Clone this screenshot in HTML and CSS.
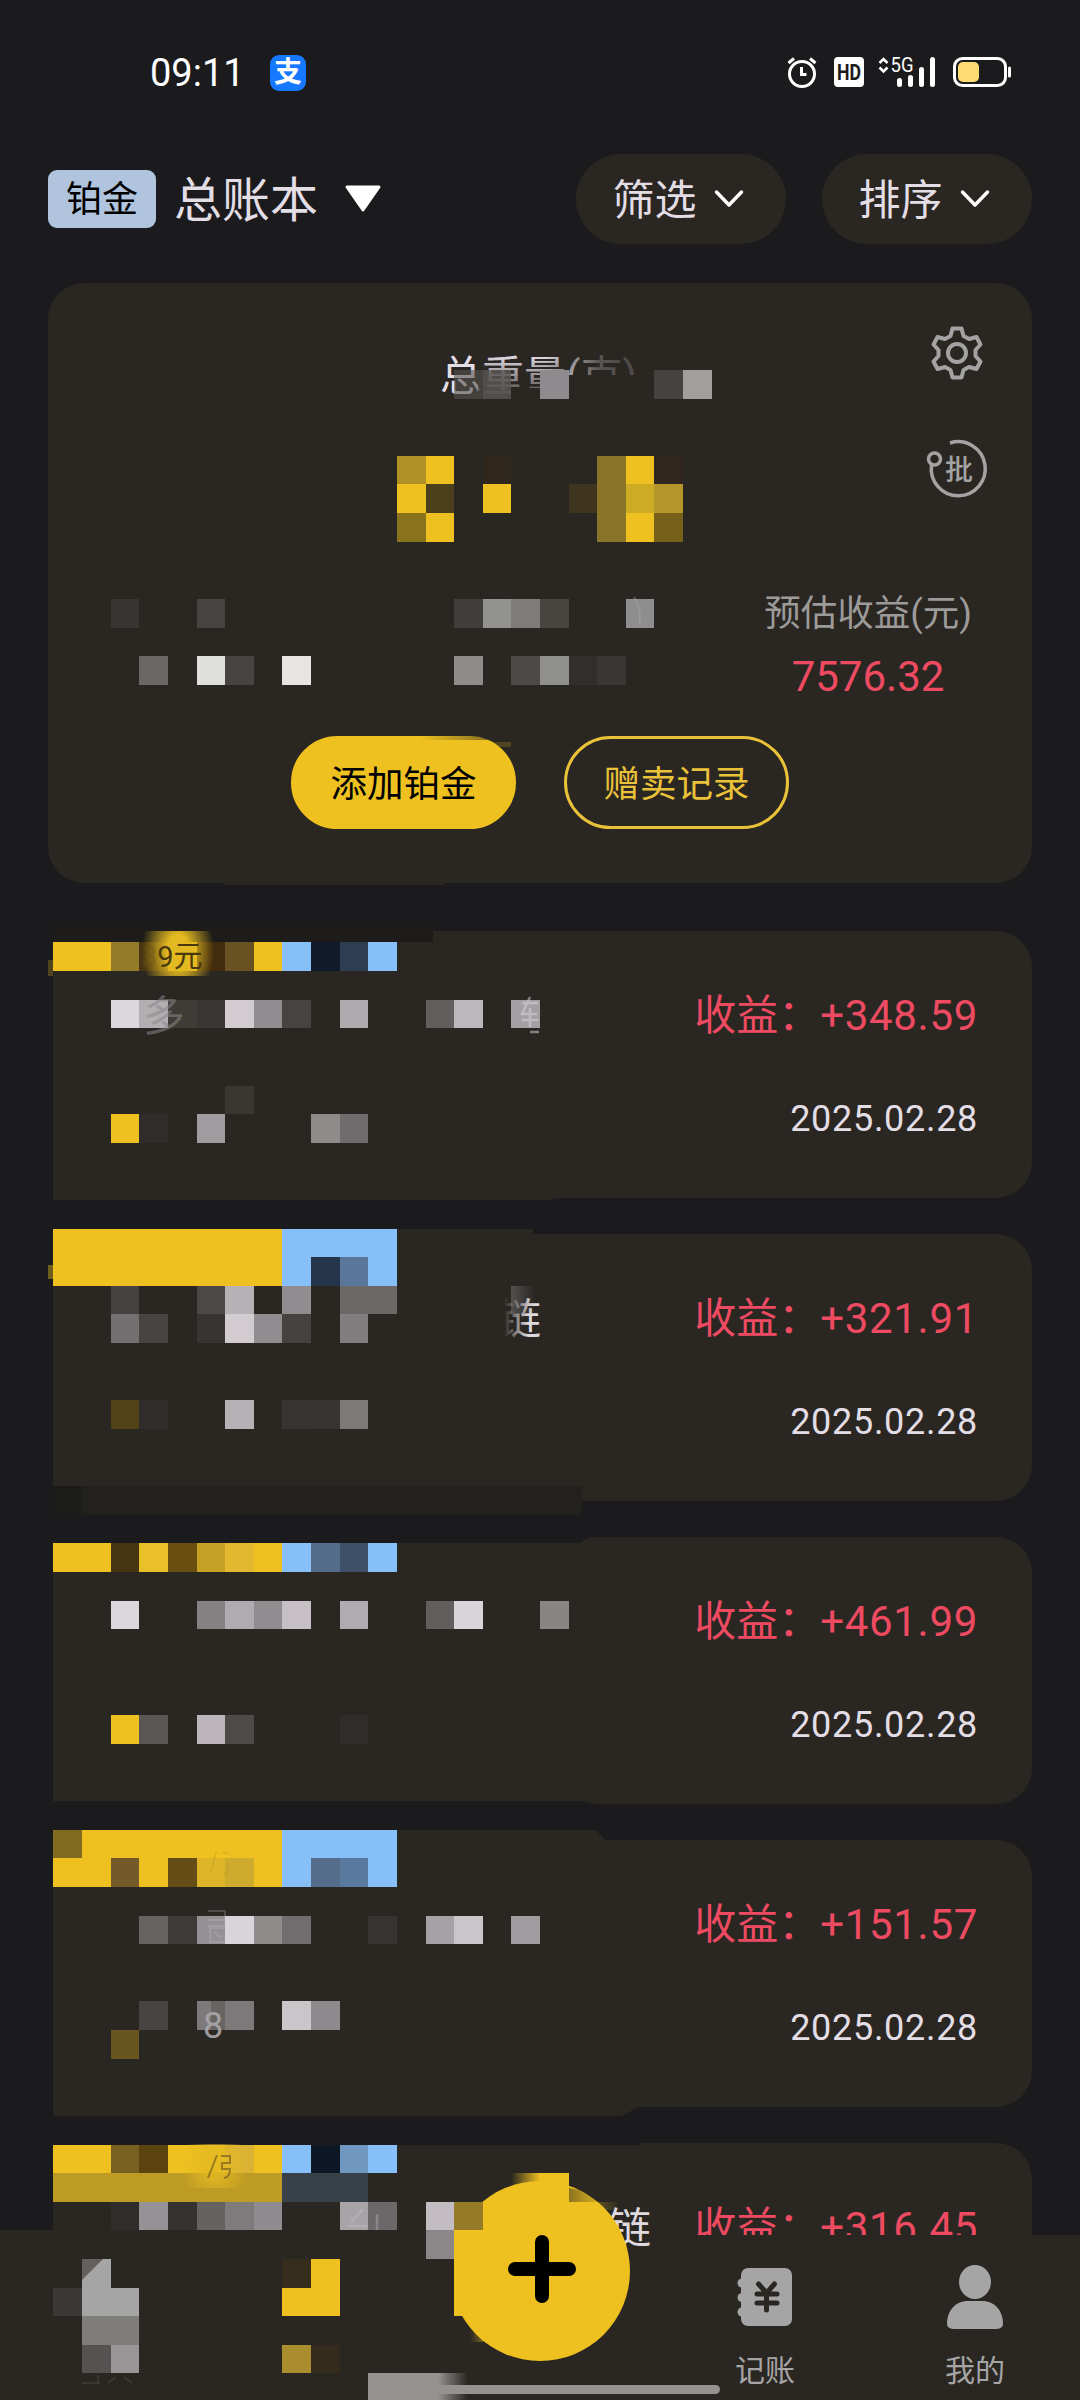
FILE: index.html
```html
<!DOCTYPE html>
<html lang="zh-CN">
<head>
    <meta charset="UTF-8">
    <meta name="viewport" content="width=device-width, initial-scale=1.0">
    <title>总账本</title>
    <link rel="stylesheet" href="styles.css">
</head>
<body>
    <div id="app">
        <!-- 状态栏 -->
        <div class="status">
            <span class="time">09:11</span>
            <span class="pay">支</span>
            <svg class="statusIcons" width="228" height="40" viewBox="786 53 228 40">
                <g fill="none" stroke="#fff" stroke-width="3">
                    <circle cx="802" cy="74" r="12.500"/>
                    <path d="M801.500 67v7.500h5M788.500 63l5.500-4.500M815.500 63l-5.500-4.500"/>
                </g>
                <rect x="834" y="57" width="30" height="30" rx="4" fill="#fff"/>
                <text x="849" y="80" font-size="22" font-weight="700" text-anchor="middle" textLength="24" lengthAdjust="spacingAndGlyphs" fill="#1b1b1d">HD</text>
                <path d="M879.500 63l4-4 4 4M879.500 67.500l4 4 4-4" fill="none" stroke="#fff" stroke-width="2.500"/>
                <text x="890.500" y="72" font-size="20" textLength="23" lengthAdjust="spacingAndGlyphs" fill="#fff">5G</text>
                <path d="M899.500 80.500v4M910.500 77.500v7M921.500 69.500v15M932.500 59.500v25" stroke="#fff" stroke-width="5" stroke-linecap="round"/>
                <rect x="954.500" y="58.500" width="51" height="27" rx="8" fill="none" stroke="#fff" stroke-width="3"/>
                <rect x="958" y="62" width="21" height="20" rx="5" fill="#ffdc73"/>
                <path d="M1009.500 68v8" stroke="#fff" stroke-width="3" stroke-linecap="round"/>
            </svg>
        </div>

        <!-- 顶部 -->
        <div class="header">
            <span class="metal">铂金</span>
            <span class="book">总账本</span>
            <svg class="arrow" width="38" height="28" viewBox="0 0 38 28"><path d="M3 2h32L19 25z" fill="#fff" stroke="#fff" stroke-width="3" stroke-linejoin="round"/></svg>
            <div class="pill"><span>筛选</span><svg width="30" height="20" viewBox="0 0 30 20"><path d="M2.500 3L15 16 27.500 3"/></svg></div>
            <div class="pill"><span>排序</span><svg width="30" height="20" viewBox="0 0 30 20"><path d="M2.500 3L15 16 27.500 3"/></svg></div>
        </div>

        <!-- 汇总 -->
        <div class="summary">
            <div class="weight">总重量(克)</div>
            <div class="tools">
                <svg width="60" height="60" viewBox="-29 -30 60 60" fill="none" stroke="#a3a3a3" stroke-width="4" stroke-linejoin="round">
                    <path d="M-4.500-24.500H4.500L6.500-17 12-14 19.500-16 23.500-8.500 18.500-3V3L23.500 8.500 19.500 16 12 14 6.500 17 4.500 24.500H-4.500L-6.500 17-12 14-19.500 16-23.500 8.500-18.500 3V-3L-23.500-8.500-19.500-16-12-14-6.500-17z"/>
                    <circle r="9"/>
                </svg>
                <svg width="64" height="64" viewBox="926 437 64 64" fill="none" stroke="#a3a3a3" stroke-width="3.500">
                    <path d="M950 443a27 27 0 1 1-18.500 22"/>
                    <circle cx="934.500" cy="459" r="6"/>
                    <text x="959" y="480" font-size="28" font-weight="500" text-anchor="middle" fill="#a3a3a3" stroke="none">批</text>
                </svg>
            </div>
            <div class="profit">
                <p>预估收益(元)</p>
                <b>7576.32</b>
            </div>
            <div class="btns">
                <span class="btn add">添加铂金</span>
                <span class="btn">赠卖记录</span>
            </div>
            <svg class="mosaic" viewBox="48 283 984 600">
                <defs>
                    <linearGradient id="fadeDown" x2="0" y2="1"><stop stop-color="#2a2622" stop-opacity="0"/><stop offset="1" stop-color="#2a2622"/></linearGradient>
                    <linearGradient id="fadeRight"><stop stop-color="#2a2622" stop-opacity="0"/><stop offset="1" stop-color="#2a2622"/></linearGradient>
                    <linearGradient id="dim"><stop stop-color="#2a2622" stop-opacity="0"/><stop offset=".5" stop-color="#2a2622" stop-opacity=".75"/><stop offset="1" stop-color="#2a2622" stop-opacity=".85"/></linearGradient>
                    <linearGradient id="fadeLeft"><stop stop-color="#2a2622"/><stop offset="1" stop-color="#2a2622" stop-opacity="0"/></linearGradient>
                    <radialGradient id="glow"><stop offset=".3" stop-color="#e3b921"/><stop offset="1" stop-color="#e3b921" stop-opacity="0"/></radialGradient>
                    <linearGradient id="goldOut"><stop stop-color="#eec120"/><stop offset="1" stop-color="#eec120" stop-opacity="0"/></linearGradient>
                    <linearGradient id="goldIn"><stop stop-color="#eec120" stop-opacity="0"/><stop offset="1" stop-color="#eec120"/></linearGradient>
                    <linearGradient id="greyOut"><stop offset=".7" stop-color="#949390"/><stop offset="1" stop-color="#949390" stop-opacity="0"/></linearGradient>
                    <linearGradient id="greyFade"><stop stop-color="#656261"/><stop offset="1" stop-color="#656261" stop-opacity="0"/></linearGradient>
                </defs>
                <rect x="478" y="355" width="90" height="50" fill="url(#fadeDown)"/>
                <rect x="545" y="345" width="110" height="60" fill="url(#dim)"/>
                <rect x="565" y="375" width="85" height="30" fill="#2a2622"/>
                <rect x="454" y="370" width="29" height="29" fill="#56524f" opacity=".6"/>
                <rect x="483" y="370" width="28" height="29" fill="#5b5755" opacity=".8"/>
                <rect x="511" y="388" width="58" height="16" fill="#2a2622"/>
                <rect x="540" y="370" width="29" height="29" fill="#8f8a8d"/>
                <rect x="654" y="370" width="29" height="29" fill="#464240"/>
                <rect x="683" y="370" width="29" height="29" fill="#a09f9d"/>
                <rect x="397" y="456" width="29" height="28" fill="#af9125"/>
                <rect x="426" y="456" width="28" height="28" fill="#eec120"/>
                <rect x="483" y="456" width="28" height="28" fill="#2f261c"/>
                <rect x="597" y="456" width="29" height="86" fill="#8a7427"/>
                <rect x="626" y="456" width="28" height="86" fill="#eec120"/>
                <rect x="654" y="456" width="29" height="28" fill="#30251f"/>
                <rect x="397" y="484" width="29" height="29" fill="#eec120"/>
                <rect x="426" y="484" width="28" height="29" fill="#4c3f1c"/>
                <rect x="483" y="484" width="28" height="29" fill="#eec120"/>
                <rect x="569" y="484" width="28" height="29" fill="#3f351e"/>
                <rect x="626" y="484" width="28" height="29" fill="#cdab25"/>
                <rect x="654" y="484" width="29" height="29" fill="#b5962a"/>
                <rect x="397" y="513" width="29" height="29" fill="#8a731d"/>
                <rect x="426" y="513" width="28" height="29" fill="#eec120"/>
                <rect x="654" y="513" width="29" height="29" fill="#77611a"/>
                <rect x="111" y="599" width="28" height="29" fill="#383431"/>
                <rect x="197" y="599" width="28" height="29" fill="#474341"/>
                <rect x="454" y="599" width="29" height="29" fill="#403d3a"/>
                <rect x="483" y="599" width="28" height="29" fill="#929390"/>
                <rect x="511" y="599" width="29" height="29" fill="#7e7c79"/>
                <rect x="540" y="599" width="29" height="29" fill="#484440"/>
                <rect x="626" y="599" width="28" height="29" fill="#8f8e8f"/>
                <path d="M634 597q7 10 6 27" stroke="#a9a7a6" stroke-width="2" fill="none" opacity=".4"/>
                <rect x="139" y="656" width="29" height="29" fill="#696864"/>
                <rect x="197" y="656" width="28" height="29" fill="#dfe0db"/>
                <rect x="225" y="656" width="29" height="29" fill="#474340"/>
                <rect x="282" y="656" width="29" height="29" fill="#e6e5e3"/>
                <rect x="454" y="656" width="29" height="29" fill="#8e8d89"/>
                <rect x="511" y="656" width="29" height="29" fill="#4d4946"/>
                <rect x="540" y="656" width="29" height="29" fill="#8f8f8b"/>
                <rect x="569" y="656" width="28" height="29" fill="#322e2b"/>
                <rect x="597" y="656" width="29" height="29" fill="#3a3633"/>
                <rect x="420" y="735" width="80" height="5" fill="url(#fadeRight)" opacity=".6"/>
                <rect x="490" y="742" width="21" height="5" fill="#eec120" opacity=".2"/>
                <rect x="225" y="883" width="220" height="2" fill="#2a2622"/>
            </svg>
        </div>

        <!-- 记录列表 -->
        <div class="list">
            <div class="item">
                <p class="income">收益：<i>+348.59</i></p>
                <p class="date">2025.02.28</p>
                <svg class="mosaic" viewBox="48 931 984 267">
                    <path d="M47 925H430V942H53V1200H47z" fill="#1b1b1d"/>
                    <rect x="53" y="925" width="380" height="17" fill="#1d1c1a"/>
                    <rect x="53" y="942" width="100" height="258" fill="#2a2622"/>
                    <rect x="53" y="1196" width="500" height="4" fill="#2a2622"/>
                    <rect x="48" y="960" width="5" height="16" fill="#eec120" opacity=".25"/>
                    <rect x="53" y="942" width="58" height="29" fill="#eec120"/>
                    <rect x="111" y="942" width="28" height="29" fill="#937b29"/>
                    <rect x="139" y="942" width="29" height="29" fill="#463510"/>
                    <rect x="168" y="942" width="29" height="29" fill="#eec120"/>
                    <rect x="197" y="942" width="28" height="29" fill="#432c0d"/>
                    <rect x="225" y="942" width="29" height="29" fill="#685221"/>
                    <rect x="254" y="942" width="28" height="29" fill="#eec120"/>
                    <rect x="282" y="942" width="29" height="29" fill="#87c0f8"/>
                    <rect x="311" y="942" width="29" height="29" fill="#101a2b"/>
                    <rect x="340" y="942" width="28" height="29" fill="#2d3d52"/>
                    <rect x="368" y="942" width="29" height="29" fill="#87c0f8"/>
                    <svg x="140" y="931" width="76" height="45"><ellipse cx="38" cy="20" rx="36" ry="55" fill="url(#glow)"/></svg>
                    <text x="141" y="967" font-size="29" fill="#4a390e"><tspan opacity=".4" fill="#6b5316">3</tspan>9元</text>
                    <rect x="111" y="1000" width="28" height="28" fill="#dcd7dc"/>
                    <rect x="139" y="1000" width="29" height="28" fill="#b3aeb1"/>
                    <rect x="168" y="1000" width="29" height="28" fill="#3f3b37"/>
                    <rect x="197" y="1000" width="28" height="28" fill="#3a3634"/>
                    <rect x="225" y="1000" width="29" height="28" fill="#d2ccd1"/>
                    <rect x="254" y="1000" width="28" height="28" fill="#918c90"/>
                    <rect x="282" y="1000" width="29" height="28" fill="#474341"/>
                    <rect x="340" y="1000" width="28" height="28" fill="#afaaad"/>
                    <rect x="426" y="1000" width="28" height="28" fill="#615e5e"/>
                    <rect x="454" y="1000" width="29" height="28" fill="#bcb7bc"/>
                    <rect x="511" y="1000" width="29" height="28" fill="#a49fa3"/>
                    <text x="143" y="1031" font-size="42" fill="#8a868a" opacity=".55">多</text>
                    <path d="M522 1003h16M530 997l-8 17h15M530 1008v19M522 1020h16M530 1032h9" stroke="#ddd8dd" stroke-width="2.500" fill="none" opacity=".5"/>
                    <rect x="225" y="1086" width="29" height="28" fill="#3a3632"/>
                    <rect x="111" y="1114" width="28" height="29" fill="#eec120"/>
                    <rect x="139" y="1114" width="29" height="29" fill="#302c29"/>
                    <rect x="197" y="1114" width="28" height="29" fill="#a09b9e"/>
                    <rect x="311" y="1114" width="29" height="29" fill="#8f8b8b"/>
                    <rect x="340" y="1114" width="28" height="29" fill="#706c6d"/>
                </svg>
            </div>

            <div class="item">
                <p class="income">收益：<i>+321.91</i></p>
                <p class="date">2025.02.28</p>
                <svg class="mosaic" viewBox="48 1234 984 267">
                    <rect x="47" y="1228" width="6" height="288" fill="#1b1b1d"/>
                    <rect x="53" y="1486" width="29" height="29" fill="#1c1c1b"/>
                    <rect x="82" y="1486" width="500" height="29" fill="#22211e"/>
                    <rect x="53" y="1229" width="480" height="257" fill="#2a2622"/>
                    <rect x="48" y="1265" width="5" height="14" fill="#eec120" opacity=".4"/>
                    <rect x="53" y="1229" width="229" height="57" fill="#eec120"/>
                    <rect x="282" y="1229" width="115" height="57" fill="#87c0f8"/>
                    <rect x="311" y="1257" width="29" height="29" fill="#25354c"/>
                    <rect x="340" y="1257" width="28" height="29" fill="#5a7698"/>
                    <rect x="111" y="1286" width="28" height="28" fill="#454140"/>
                    <rect x="197" y="1286" width="28" height="28" fill="#4c4845"/>
                    <rect x="225" y="1286" width="29" height="28" fill="#b6b1b5"/>
                    <rect x="282" y="1286" width="29" height="28" fill="#918c90"/>
                    <rect x="340" y="1286" width="57" height="28" fill="#6c6866"/>
                    <rect x="111" y="1314" width="28" height="29" fill="#737071"/>
                    <rect x="139" y="1314" width="29" height="29" fill="#464542"/>
                    <rect x="197" y="1314" width="28" height="29" fill="#383431"/>
                    <rect x="225" y="1314" width="29" height="29" fill="#d2ccd1"/>
                    <rect x="254" y="1314" width="28" height="29" fill="#918c90"/>
                    <rect x="282" y="1314" width="29" height="29" fill="#464240"/>
                    <rect x="340" y="1314" width="28" height="29" fill="#827e7f"/>
                    <text x="499" y="1334" font-size="42" fill="#dedae0">链</text>
                    <rect x="496" y="1290" width="8" height="50" fill="#2a2622"/>
                    <rect x="504" y="1290" width="24" height="50" fill="url(#fadeLeft)"/>
                    <rect x="511" y="1286" width="24" height="28" fill="url(#greyFade)" opacity=".7"/>
                    <rect x="111" y="1400" width="28" height="29" fill="#514317"/>
                    <rect x="139" y="1400" width="29" height="29" fill="#302d2a"/>
                    <rect x="225" y="1400" width="29" height="29" fill="#b6b1b5"/>
                    <rect x="282" y="1400" width="29" height="29" fill="#373330"/>
                    <rect x="311" y="1400" width="29" height="29" fill="#383433"/>
                    <rect x="340" y="1400" width="28" height="29" fill="#7d7978"/>
                </svg>
            </div>

            <div class="item">
                <p class="income">收益：<i>+461.99</i></p>
                <p class="date">2025.02.28</p>
                <svg class="mosaic" viewBox="48 1537 984 267">
                    <path d="M47 1536H590L580 1543H53V1801H580L600 1805H47z" fill="#1b1b1d"/>
                    <rect x="53" y="1543" width="100" height="258" fill="#2a2622"/>
                    <rect x="53" y="1543" width="58" height="29" fill="#eec120"/>
                    <rect x="111" y="1543" width="28" height="29" fill="#473512"/>
                    <rect x="139" y="1543" width="29" height="29" fill="#eac028"/>
                    <rect x="168" y="1543" width="29" height="29" fill="#684f10"/>
                    <rect x="197" y="1543" width="28" height="29" fill="#c7a126"/>
                    <rect x="225" y="1543" width="29" height="29" fill="#e1b830"/>
                    <rect x="254" y="1543" width="28" height="29" fill="#eec120"/>
                    <rect x="282" y="1543" width="29" height="29" fill="#87c0f8"/>
                    <rect x="311" y="1543" width="29" height="29" fill="#536c8a"/>
                    <rect x="340" y="1543" width="28" height="29" fill="#3d5067"/>
                    <rect x="368" y="1543" width="29" height="29" fill="#87c0f8"/>
                    <rect x="111" y="1601" width="28" height="28" fill="#dcd7dc"/>
                    <rect x="197" y="1601" width="28" height="28" fill="#858082"/>
                    <rect x="225" y="1601" width="29" height="28" fill="#b0abb0"/>
                    <rect x="254" y="1601" width="28" height="28" fill="#918c8f"/>
                    <rect x="282" y="1601" width="29" height="28" fill="#c6c0c6"/>
                    <rect x="340" y="1601" width="28" height="28" fill="#b0abb0"/>
                    <rect x="426" y="1601" width="28" height="28" fill="#625e5e"/>
                    <rect x="454" y="1601" width="29" height="28" fill="#d9d4da"/>
                    <rect x="540" y="1601" width="29" height="28" fill="#888685"/>
                    <rect x="111" y="1715" width="28" height="29" fill="#eec120"/>
                    <rect x="139" y="1715" width="29" height="29" fill="#5a5654"/>
                    <rect x="197" y="1715" width="28" height="29" fill="#bcb6bb"/>
                    <rect x="225" y="1715" width="29" height="29" fill="#4e4a48"/>
                    <rect x="340" y="1715" width="28" height="29" fill="#302c29"/>
                </svg>
            </div>

            <div class="item">
                <p class="income">收益：<i>+151.57</i></p>
                <p class="date">2025.02.28</p>
                <svg class="mosaic" viewBox="48 1840 984 267">
                    <rect x="47" y="1836" width="6" height="280" fill="#1b1b1d"/>
                    <path d="M53 1830H596L606 1841V2106H640L622 2116H53z" fill="#2a2622"/>
                    <rect x="53" y="1830" width="229" height="57" fill="#eec120"/>
                    <rect x="282" y="1830" width="115" height="57" fill="#87c0f8"/>
                    <rect x="53" y="1830" width="29" height="28" fill="#816b21"/>
                    <rect x="111" y="1858" width="28" height="29" fill="#745a28"/>
                    <rect x="168" y="1858" width="29" height="29" fill="#644d17"/>
                    <rect x="197" y="1858" width="28" height="29" fill="#deb529"/>
                    <rect x="225" y="1858" width="29" height="29" fill="#cfab2d"/>
                    <path d="M216 1852l-5 21M222 1853h7M228 1863v8l-4 5" stroke="#b08f20" stroke-width="1.500" fill="none" opacity=".3"/>
                    <rect x="311" y="1858" width="29" height="29" fill="#536d8a"/>
                    <rect x="340" y="1858" width="28" height="29" fill="#5a799f"/>
                    <rect x="139" y="1916" width="29" height="28" fill="#676361"/>
                    <rect x="168" y="1916" width="29" height="28" fill="#3e3a37"/>
                    <rect x="197" y="1916" width="28" height="28" fill="#949094"/>
                    <rect x="225" y="1916" width="29" height="28" fill="#d9d4da"/>
                    <rect x="254" y="1916" width="28" height="28" fill="#908c8c"/>
                    <rect x="282" y="1916" width="29" height="28" fill="#716d6e"/>
                    <path d="M208 1911h17v15h-17M208 1920h17M210 1926v16M210 1928h14M215 1932l5 6M210 1942h15" stroke="#c5c0c5" stroke-width="2" fill="none" opacity=".25"/>
                    <rect x="368" y="1916" width="29" height="28" fill="#373331"/>
                    <rect x="426" y="1916" width="28" height="28" fill="#a6a1a5"/>
                    <rect x="454" y="1916" width="29" height="28" fill="#cac5c9"/>
                    <rect x="511" y="1916" width="29" height="28" fill="#a09b9f"/>
                    <rect x="139" y="2001" width="29" height="29" fill="#484442"/>
                    <rect x="197" y="2001" width="57" height="29" fill="#7d797b"/>
                    <rect x="211" y="2001" width="14" height="29" fill="#686462"/>
                    <text x="203" y="2038" font-size="36" fill="#aaa6aa" opacity=".9">8</text>
                    <rect x="282" y="2001" width="29" height="29" fill="#cac5c9"/>
                    <rect x="311" y="2001" width="29" height="29" fill="#8e898c"/>
                    <rect x="111" y="2030" width="28" height="29" fill="#685520"/>
                </svg>
            </div>

            <div class="item">
                <p class="income">收益：<i>+316.45</i></p>
                <p class="date">2025.02.28</p>
                <svg class="mosaic" viewBox="48 2143 984 267">
                    <path d="M47 2142H640V2145H53V2300H47z" fill="#1b1b1d"/>
                    <rect x="53" y="2145" width="100" height="100" fill="#2a2622"/>
                    <rect x="53" y="2145" width="229" height="28" fill="#eec120"/>
                    <rect x="53" y="2173" width="229" height="29" fill="#be9b24"/>
                    <rect x="111" y="2145" width="28" height="28" fill="#776020"/>
                    <rect x="139" y="2145" width="29" height="28" fill="#5b430f"/>
                    <rect x="225" y="2145" width="29" height="28" fill="#dbb334"/>
                    <svg x="180" y="2144" width="70" height="44"><ellipse cx="35" cy="22" rx="33" ry="40" fill="url(#glow)" opacity=".8"/></svg>
                    <path d="M217 2155l-9 23M221 2156h9v7h-8v6h8q0 8-6 9" stroke="#776020" stroke-width="2" fill="none" opacity=".7"/>
                    <rect x="282" y="2145" width="29" height="28" fill="#87c0f8"/>
                    <rect x="311" y="2145" width="29" height="28" fill="#0e1725"/>
                    <rect x="340" y="2145" width="28" height="28" fill="#7097c0"/>
                    <rect x="368" y="2145" width="29" height="28" fill="#87c0f8"/>
                    <rect x="282" y="2173" width="86" height="29" fill="#38414a"/>
                    <rect x="111" y="2202" width="28" height="28" fill="#302c29"/>
                    <rect x="139" y="2202" width="29" height="28" fill="#969195"/>
                    <rect x="168" y="2202" width="29" height="28" fill="#36322f"/>
                    <rect x="197" y="2202" width="28" height="28" fill="#666261"/>
                    <rect x="225" y="2202" width="29" height="28" fill="#7f7b7c"/>
                    <rect x="254" y="2202" width="28" height="28" fill="#908b8f"/>
                    <rect x="340" y="2202" width="28" height="28" fill="#a7a3a7"/>
                    <rect x="368" y="2202" width="29" height="28" fill="#6c686a"/>
                    <path d="M363 2209l-12 13M348 2226h19M377 2214v16" stroke="#d2cdd2" stroke-width="2.500" fill="none" opacity=".3"/>
                </svg>
            </div>
        </div>

        <!-- 底部导航 -->
        <div class="nav">
            <svg class="mosaic" viewBox="0 2235 1080 165">
                <rect x="0" y="2230" width="480" height="6" fill="#2a2622"/>
                <rect x="82" y="2259" width="29" height="57" fill="#a5a5a5"/>
                <path d="M82 2259h21L82 2280z" fill="#63605e"/>
                <rect x="53" y="2288" width="29" height="28" fill="#3b3835"/>
                <rect x="111" y="2288" width="28" height="28" fill="#a5a5a5"/>
                <rect x="82" y="2316" width="57" height="29" fill="#7e7d7a"/>
                <rect x="82" y="2345" width="29" height="28" fill="#555351"/>
                <rect x="111" y="2345" width="28" height="28" fill="#9a9698"/>
                <path d="M82 2383h18M98 2375v8M108 2383l8-6M124 2377l8 6" stroke="#474340" stroke-width="2" fill="none" opacity=".6"/>
                <rect x="282" y="2259" width="29" height="29" fill="#352c1c"/>
                <rect x="311" y="2259" width="29" height="29" fill="#eec120"/>
                <rect x="282" y="2288" width="58" height="28" fill="#eec120"/>
                <rect x="282" y="2345" width="29" height="28" fill="#aa8d2d"/>
                <rect x="311" y="2345" width="29" height="28" fill="#342b1d"/>
                <text x="609" y="2243" font-size="42" fill="#dedae0">链</text>
                <circle cx="540" cy="2271" r="90" fill="#eec120"/>
                <rect x="426" y="2202" width="28" height="28" fill="#c3bdc3"/>
                <rect x="426" y="2230" width="28" height="86" fill="#2a2622"/>
                <rect x="426" y="2230" width="28" height="29" fill="#8b8687"/>
                <rect x="454" y="2202" width="29" height="28" fill="#957b28"/>
                <rect x="454" y="2230" width="29" height="86" fill="#eec120"/>
                <rect x="483" y="2202" width="28" height="28" fill="#eec120"/>
                <rect x="511" y="2173" width="29" height="29" fill="url(#goldIn)"/>
                <rect x="540" y="2173" width="29" height="29" fill="#eec120"/>
                <path d="M569 2188q22 3 38 14H569z" fill="url(#fadeLeft)" opacity=".5"/>
                <rect x="596" y="2202" width="24" height="8" fill="url(#goldOut)" opacity=".3"/>
                <rect x="470" y="2316" width="13" height="26" fill="url(#goldIn)" opacity=".4"/>
                <path d="M542 2242v54M515 2269h54" stroke="#000" stroke-width="14" stroke-linecap="round"/>
                <path d="M368 2385h347.500a4.500 4.500 0 0 1 0 9H368z" fill="#949390"/>
                <rect x="368" y="2373" width="100" height="27" fill="url(#greyOut)"/>
            </svg>
            <div class="tab"></div>
            <div class="tab"></div>
            <div class="tab"></div>
            <div class="tab">
                <svg width="60" height="68" viewBox="735 2263 60 68">
                    <rect x="741" y="2268" width="51" height="58" rx="7" fill="#a5a5a5"/>
                    <g fill="#a5a5a5"><circle cx="742" cy="2283" r="4.500"/><circle cx="742" cy="2297.500" r="4.500"/><circle cx="742" cy="2312" r="4.500"/></g>
                    <path d="M758.500 2284l8 9 8-9M766.500 2293v17M757 2294h20M757 2303h20" fill="none" stroke="#2a2622" stroke-width="5" stroke-linecap="round"/>
                </svg>
                <span>记账</span>
            </div>
            <div class="tab">
                <svg width="60" height="68" viewBox="945 2263 60 68" fill="#a5a5a5">
                    <ellipse cx="975" cy="2282" rx="16" ry="17"/>
                    <path d="M968 2301h14c13 0 21 10 21 23 0 4-4 5-8 5h-40c-4 0-8-1-8-5 0-13 8-23 21-23z"/>
                </svg>
                <span>我的</span>
            </div>
        </div>
    </div>
</body>
</html>
```
FILE: styles.css
```css
*{
    margin: 0;
    padding: 0;
    box-sizing: border-box;
}

body{
    background: #1b1b1d;
    font-family: Roboto, "Noto Sans CJK SC", sans-serif;
}

#app{
    width: 1080px;
    height: 2400px;
    position: relative;
    overflow: hidden;
    color: #e3dee5;
}

svg{
    display: block;
    flex: none;
}

i,b{
    font-style: normal;
    font-weight: 400;
}

/* 状态栏 */
.status{
    height: 154px;
    padding: 53px 66px 0 150px;
    display: flex;
    align-items: flex-start;
    color: #fff;
}

.time{
    font-size: 38px;
    line-height: 40px;
    width: 120px;
}

.pay{
    width: 36px;
    height: 36px;
    margin-top: 2px;
    border-radius: 9px;
    background: #1677ff;
    font-size: 28px;
    font-weight: 700;
    line-height: 35px;
    text-align: center;
}

.statusIcons{
    margin-left: auto;
}

/* 顶部 */
.header{
    height: 90px;
    padding: 0 48px;
    display: flex;
    align-items: center;
}

.metal{
    width: 108px;
    height: 58px;
    margin-right: 18px;
    padding-top: 2px;
    border-radius: 9px;
    background: #b0c4de;
    color: #000;
    font-size: 36px;
    line-height: 57px;
    text-align: center;
}

.book{
    padding-top: 4px;
    font-size: 48px;
    line-height: 86px;
}

.arrow{
    margin: 0 auto 0 26px;
}

.pill{
    width: 210px;
    height: 90px;
    margin-left: 36px;
    padding-right: 6px;
    border-radius: 45px;
    background: #2a2622;
    font-size: 42px;
    line-height: 86px;
    display: flex;
    align-items: center;
    justify-content: center;
    gap: 17px;
}

.pill span{
    padding-top: 4px;
}

.pill path{
    fill: none;
    stroke: #fff;
    stroke-width: 3.5;
    stroke-linecap: round;
    stroke-linejoin: round;
}

/* 汇总 */
.summary{
    height: 600px;
    margin: 39px 48px 0;
    border-radius: 36px;
    background: #2a2622;
    position: relative;
    display: flex;
    flex-direction: column;
}

.weight{
    padding: 64px 0 0 392px;
    font-size: 42px;
    line-height: 60px;
}

.tools{
    position: absolute;
    top: 40px;
    right: 42px;
    display: flex;
    flex-direction: column;
    align-items: center;
    gap: 54px;
}

.profit{
    width: 218px;
    margin: 180px 55px 0 auto;
    text-align: center;
}

.profit p{
    color: #9c9b99;
    font-size: 36.5px;
    line-height: 54px;
}

.profit b{
    display: block;
    color: #ee4b62;
    font-size: 42px;
    line-height: 72px;
}

.btns{
    margin-top: 23px;
    display: flex;
    justify-content: center;
    gap: 48px;
}

.btn{
    width: 225px;
    height: 93px;
    padding-top: 2px;
    border: 3px solid #eac23a;
    border-radius: 47px;
    color: #eac23a;
    font-size: 36.5px;
    line-height: 87px;
    text-align: center;
}

.btn.add{
    background: #eec120;
    border-color: #eec120;
    color: #000;
}

.mosaic{
    width: 100%;
    height: 100%;
    position: absolute;
    top: 0;
    left: 0;
    overflow: visible;
}

/* 记录列表 */
.list{
    padding: 48px 48px 0;
    display: flex;
    flex-direction: column;
    gap: 36px;
}

.item{
    height: 267px;
    flex: none;
    padding: 55px 54px 0 0;
    border-radius: 36px;
    background: #2a2622;
    position: relative;
    text-align: right;
}

.income{
    color: #ee4b62;
    font-size: 42px;
    line-height: 60px;
}

.income i{
    letter-spacing: .7px;
}

.date{
    margin-top: 43px;
    font-size: 36px;
    line-height: 60px;
    letter-spacing: .7px;
}

/* 底部导航 */
.nav{
    width: 1080px;
    height: 165px;
    position: absolute;
    left: 0;
    bottom: 0;
    background: #2a2622;
    display: grid;
    grid-template-columns: 210px 210px 240px 210px 210px;
}

.tab{
    padding-top: 28px;
    display: flex;
    flex-direction: column;
    align-items: center;
    color: #a5a5a5;
    font-size: 30px;
    line-height: 80px;
}

.tab span{
    height: 69px;
}
```
